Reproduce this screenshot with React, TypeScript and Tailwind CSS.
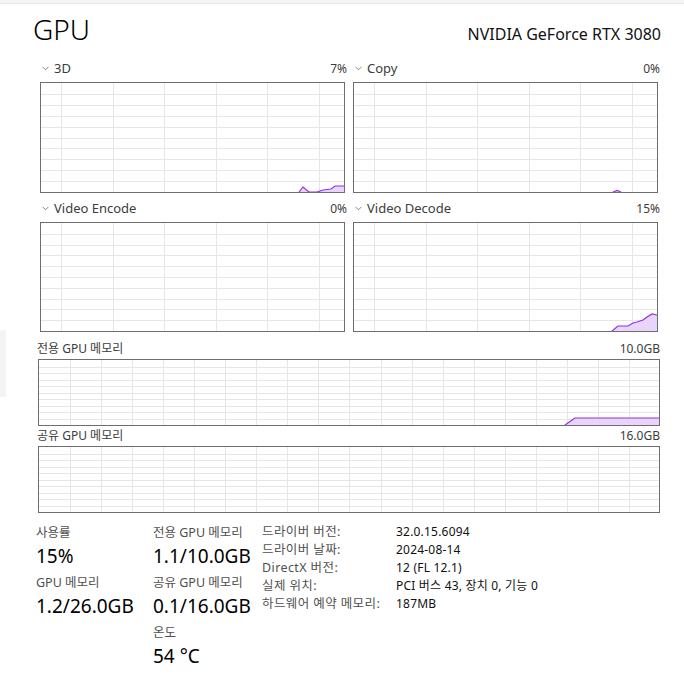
import React from 'react';

type Pt = [number, number];

interface ChartProps {
  width: number;
  height: number;
  colStep: number;
  colOffset: number;
  rows: number;
  points?: Pt[];
}

const FONT = '"Noto Sans", "Noto Sans CJK KR", sans-serif';

function Chart({ width, height, colStep, colOffset, rows, points = [] }: ChartProps) {
  const iw = width - 2;
  const ih = height - 2;
  const vLines: number[] = [];
  for (let x = colOffset; x < iw; x += colStep) vLines.push(Math.round(x));
  const hLines: number[] = [];
  for (let i = 1; i < rows; i++) hLines.push(Math.round((ih * i) / rows));

  const line = points.map(([x, v]) => `${x},${ih - v}`).join(' ');
  const fill =
    points.length > 0
      ? `${points[0][0]},${ih} ${line} ${points[points.length - 1][0]},${ih}`
      : '';

  return (
    <div
      className="border border-[#6e6e6e] bg-white"
      style={{ width, height }}
    >
      <svg width={iw} height={ih} viewBox={`0 0 ${iw} ${ih}`} className="block">
        {vLines.map((x) => (
          <line key={`v${x}`} x1={x + 0.5} y1={0} x2={x + 0.5} y2={ih} stroke="#e6e6e6" strokeWidth={1} />
        ))}
        {hLines.map((y) => (
          <line key={`h${y}`} x1={0} y1={y + 0.5} x2={iw} y2={y + 0.5} stroke="#e6e6e6" strokeWidth={1} />
        ))}
        {points.length > 0 && (
          <>
            <polygon points={fill} fill="#e8d5fa" />
            <polyline points={line} fill="none" stroke="#9331e6" strokeWidth={1.2} />
          </>
        )}
      </svg>
    </div>
  );
}

function Chevron() {
  return (
    <svg width="7" height="5" viewBox="0 0 7 5" className="mr-[5px] ml-[2px]">
      <path d="M0.5 0.8 L3.5 3.8 L6.5 0.8" fill="none" stroke="#777" strokeWidth="0.9" />
    </svg>
  );
}

function EngineLabel({ name, value }: { name: string; value: string }) {
  return (
    <div className="h-[23px]">
      <div className="flex h-[19px] items-center justify-between text-[13px] text-[#3c3c3c]">
        <div className="flex items-center">
          <Chevron />
          <span>{name}</span>
        </div>
        <span className="mr-[-2px] text-[12px]">{value}</span>
      </div>
    </div>
  );
}

const details: [string, string][] = [
  ['드라이버 버전:', '32.0.15.6094'],
  ['드라이버 날짜:', '2024-08-14'],
  ['DirectX 버전:', '12 (FL 12.1)'],
  ['실제 위치:', 'PCI 버스 43, 장치 0, 기능 0'],
  ['하드웨어 예약 메모리:', '187MB'],
];

function Stat({ label, value }: { label: string; value: string }) {
  return (
    <div className="mb-[4px]">
      <div className="flex h-[20px] items-center text-[12.5px] text-[#505050]">{label}</div>
      <div className="flex h-[26px] items-center text-[19px] text-black">{value}</div>
    </div>
  );
}

export default function App() {
  return (
    <div
      className="relative h-[686px] w-[684px] overflow-hidden bg-white"
      style={{ fontFamily: FONT }}
    >
      <div className="h-[4px] border-b border-[#ebe7e5] bg-[#f6f4f3]" />
      <div className="absolute left-0 top-[330px] h-[67px] w-[6px] bg-[#f4f4f4]" />

      <div className="flex h-[55px] items-baseline justify-between pl-[33px] pr-[23px]">
        <span className="text-[28px] font-light leading-[50px] text-black">GPU</span>
        <span className="text-[16px] text-[#111]">NVIDIA GeForce RTX 3080</span>
      </div>

      <div className="pl-[38px] pr-[24px]">
        <div className="grid grid-cols-2 gap-x-[8px] px-[2px]">
          <div>
            <EngineLabel name="3D" value="7%" />
            <Chart
              width={305}
              height={111}
              colStep={51.6}
              colOffset={20}
              rows={10}
              points={[[258, 0], [262, 5], [268, 0], [276, 0], [282, 2], [290, 3], [294, 6], [303, 6]]}
            />
          </div>
          <div>
            <EngineLabel name="Copy" value="0%" />
            <Chart
              width={305}
              height={111}
              colStep={51.6}
              colOffset={20}
              rows={10}
              points={[[259, 0], [263, 1.5], [267, 0]]}
            />
          </div>
          <div className="mt-[6px]">
            <EngineLabel name="Video Encode" value="0%" />
            <Chart width={305} height={110} colStep={51.6} colOffset={20} rows={10} />
          </div>
          <div className="mt-[6px]">
            <EngineLabel name="Video Decode" value="15%" />
            <Chart
              width={305}
              height={110}
              colStep={51.6}
              colOffset={20}
              rows={10}
              points={[[258, 0], [264, 5], [274, 5], [279, 8], [283, 9], [289, 11], [293, 14], [298, 17], [303, 16]]}
            />
          </div>
        </div>

        <div className="mt-[7px]">
          <div className="flex h-[20px] items-center justify-between text-[12px] text-[#3c3c3c]">
            <span className="ml-[-1px]">전용 GPU 메모리</span>
            <span>10.0GB</span>
          </div>
          <Chart
            width={622}
            height={67}
            colStep={31.05}
            colOffset={31}
            rows={10}
            points={[[526, 0], [536, 7], [620, 7]]}
          />
          <div className="flex h-[20px] items-center justify-between text-[12px] text-[#3c3c3c]">
            <span className="ml-[-1px]">공유 GPU 메모리</span>
            <span>16.0GB</span>
          </div>
          <Chart width={622} height={67} colStep={31.05} colOffset={31} rows={10} />
        </div>
      </div>

      <div className="mt-[10px] flex pl-[36px]">
        <div className="w-[117px]">
          <Stat label="사용률" value="15%" />
          <Stat label="GPU 메모리" value="1.2/26.0GB" />
        </div>
        <div className="w-[109px]">
          <Stat label="전용 GPU 메모리" value="1.1/10.0GB" />
          <Stat label="공유 GPU 메모리" value="0.1/16.0GB" />
          <Stat label="온도" value="54 °C" />
        </div>
        <div className="flex flex-col">
          {details.map(([k, v]) => (
            <div key={k} className="flex h-[18px] items-center text-[12px]">
              <span className="w-[134px] text-[12.5px] tracking-[0.4px] text-[#505050]">{k}</span>
              <span className="text-[#111] tracking-[0.2px]">{v}</span>
            </div>
          ))}
        </div>
      </div>
    </div>
  );
}
